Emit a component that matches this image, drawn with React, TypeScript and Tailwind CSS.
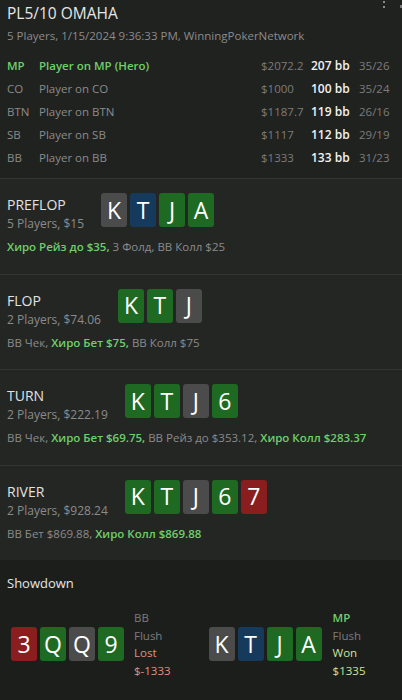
import React from "react";

type Suit = "g" | "b" | "n" | "r";

interface Card {
  rank: string;
  suit: Suit;
}

interface Action {
  text: string;
  hero?: boolean;
}

interface Street {
  name: string;
  info: string;
  cards: Card[];
  actions: Action[];
}

const suitBg: Record<Suit, string> = {
  g: "bg-[#4a4b4a]",
  b: "bg-[#163a5c]",
  n: "bg-[#1f6a23]",
  r: "bg-[#8a1e1f]",
};

const players = [
  { pos: "MP", name: "Player on MP (Hero)", stack: "$2072.2", bb: "207 bb", stats: "35/26", hero: true },
  { pos: "CO", name: "Player on CO", stack: "$1000", bb: "100 bb", stats: "35/24" },
  { pos: "BTN", name: "Player on BTN", stack: "$1187.7", bb: "119 bb", stats: "26/16" },
  { pos: "SB", name: "Player on SB", stack: "$1117", bb: "112 bb", stats: "29/19" },
  { pos: "BB", name: "Player on BB", stack: "$1333", bb: "133 bb", stats: "31/23" },
];

const streets: Street[] = [
  {
    name: "PREFLOP",
    info: "5 Players, $15",
    cards: [
      { rank: "K", suit: "g" },
      { rank: "T", suit: "b" },
      { rank: "J", suit: "n" },
      { rank: "A", suit: "n" },
    ],
    actions: [{ text: "Хиро Рейз до $35,", hero: true }, { text: "3 Фолд, BB Колл $25" }],
  },
  {
    name: "FLOP",
    info: "2 Players, $74.06",
    cards: [
      { rank: "K", suit: "n" },
      { rank: "T", suit: "n" },
      { rank: "J", suit: "g" },
    ],
    actions: [{ text: "BB Чек," }, { text: "Хиро Бет $75,", hero: true }, { text: "BB Колл $75" }],
  },
  {
    name: "TURN",
    info: "2 Players, $222.19",
    cards: [
      { rank: "K", suit: "n" },
      { rank: "T", suit: "n" },
      { rank: "J", suit: "g" },
      { rank: "6", suit: "n" },
    ],
    actions: [
      { text: "BB Чек," },
      { text: "Хиро Бет $69.75,", hero: true },
      { text: "BB Рейз до $353.12," },
      { text: "Хиро Колл $283.37", hero: true },
    ],
  },
  {
    name: "RIVER",
    info: "2 Players, $928.24",
    cards: [
      { rank: "K", suit: "n" },
      { rank: "T", suit: "n" },
      { rank: "J", suit: "g" },
      { rank: "6", suit: "n" },
      { rank: "7", suit: "r" },
    ],
    actions: [{ text: "BB Бет $869.88," }, { text: "Хиро Колл $869.88", hero: true }],
  },
];

export default function App() {
  return (
    <div className="w-[402px] h-[700px] overflow-hidden bg-[#1c1e1c] text-[#e2e2e2] font-['Open_Sans','Noto_Sans',sans-serif]">
      {/* HEADER */}
      <div className="relative bg-[#202220] px-[7px] pt-[3px] pb-[9px]">
        {/* cut-off overflow menu dots */}
        <div className="absolute right-[17px] top-[1px] flex flex-col gap-[3px]">
          <span className="w-[2px] h-[2px] bg-[#8a8a8a]" />
          <span className="w-[2px] h-[2px] bg-[#8a8a8a]" />
        </div>
        <span className="absolute right-0 top-[5px] w-[2px] h-[3px] bg-[#7a7a7a]" />
        <h1 className="text-[15.5px] leading-[20px] text-[#e6e6e6]">PL5/10 OMAHA</h1>
        <p className="mt-[5px] text-[11.5px] leading-[16px] text-[#8b8b8b]">
          5 Players, 1/15/2024 9:36:33 PM, WinningPokerNetwork
        </p>
        <div className="mt-[10px]">
          {players.map((p) => (
            <div key={p.pos} className="flex items-center h-[23px] text-[11.5px]">
              <span className={`w-[32px] ${p.hero ? "text-[#6fcf6a] font-semibold" : "text-[#8b8b8b]"}`}>{p.pos}</span>
              <span className={`flex-1 ${p.hero ? "text-[#6fcf6a] font-semibold" : "text-[#8b8b8b]"}`}>{p.name}</span>
              <span className="w-[50px] text-[#7c7c7c]">{p.stack}</span>
              <span className="w-[48px] font-semibold text-[#f2f2f2] text-[12px]">{p.bb}</span>
              <span className="w-[36px] text-[#7c7c7c]">{p.stats}</span>
            </div>
          ))}
        </div>
      </div>

      {/* STREETS */}
      {streets.map((s) => (
        <div key={s.name} className="bg-[#242624] border-t border-[#333533] px-[7px] pt-[14px] pb-[18px] h-[95.5px]">
          <div className="flex items-start gap-[17px]">
            <div className="mt-[2px]">
              <p className="text-[14px] leading-[20px] text-[#e2e2e2]">{s.name}</p>
              <p className="text-[12px] leading-[18px] text-[#8b8b8b]">{s.info}</p>
            </div>
            <CardRow cards={s.cards} />
          </div>
          <p className="mt-[5px] text-[11.5px] leading-[18px] text-[#8b8b8b]">
            {s.actions.map((a, i) => (
              <span key={i} className={a.hero ? "text-[#6fcf6a] font-semibold" : ""}>
                {i > 0 ? " " : ""}
                {a.text}
              </span>
            ))}
          </p>
        </div>
      ))}

      {/* SHOWDOWN */}
      <div className="bg-[#1c1e1c] px-[7px] pt-[14px]">
        <p className="text-[13px] leading-[18px] text-[#e6e6e6]">Showdown</p>
        <div className="mt-[17px] flex items-center">
          <div className="flex items-center pl-[4px]">
            <CardRow cards={[
              { rank: "3", suit: "r" },
              { rank: "Q", suit: "n" },
              { rank: "Q", suit: "g" },
              { rank: "9", suit: "n" },
            ]} />
            <div className="ml-[10px] text-[11.5px] leading-[17.7px]">
              <p className="text-[#7c7c7c]">BB</p>
              <p className="text-[#7c7c7c]">Flush</p>
              <p className="text-[#e0907f]">Lost</p>
              <p className="text-[#e0907f]">$-1333</p>
            </div>
          </div>
          <div className="ml-[38px] flex items-center">
            <CardRow cards={[
              { rank: "K", suit: "g" },
              { rank: "T", suit: "b" },
              { rank: "J", suit: "n" },
              { rank: "A", suit: "n" },
            ]} />
            <div className="ml-[11px] text-[11.5px] leading-[17.7px]">
              <p className="text-[#6fcf6a] font-semibold">MP</p>
              <p className="text-[#7c7c7c]">Flush</p>
              <p className="text-[#cde39a]">Won</p>
              <p className="text-[#cde39a]">$1335</p>
            </div>
          </div>
        </div>
      </div>
    </div>
  );
}

function CardRow({ cards }: { cards: Card[] }) {
  return (
    <div className="flex gap-[3px]">
      {cards.map((c, i) => (
        <div
          key={i}
          className={`w-[26px] h-[34px] rounded-[3px] flex items-center justify-center text-[23px] leading-none text-white ${suitBg[c.suit]}`}
        >
          {c.rank}
        </div>
      ))}
    </div>
  );
}
